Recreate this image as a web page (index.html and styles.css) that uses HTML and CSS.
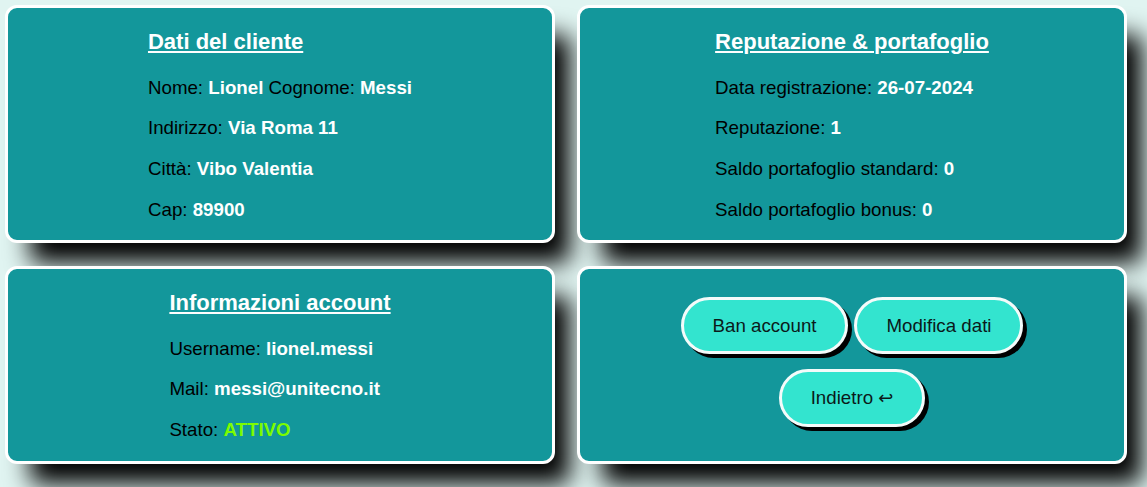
FILE: index.html
```html
<!DOCTYPE html>
<html lang="it">
<head>
<meta charset="utf-8">
<title>Dati cliente</title>
<link rel="stylesheet" href="styles.css">
</head>
<body>
<main class="grid">
  <section class="card">
    <div class="card-body">
      <h2 class="card-title">Dati del cliente</h2>
      <p class="row">Nome: <b>Lionel</b> Cognome: <b>Messi</b></p>
      <p class="row">Indirizzo: <b>Via Roma 11</b></p>
      <p class="row">Città: <b>Vibo Valentia</b></p>
      <p class="row">Cap: <b>89900</b></p>
    </div>
  </section>
  <section class="card">
    <div class="card-body">
      <h2 class="card-title">Reputazione &amp; portafoglio</h2>
      <p class="row">Data registrazione: <b>26-07-2024</b></p>
      <p class="row">Reputazione: <b>1</b></p>
      <p class="row">Saldo portafoglio standard: <b>0</b></p>
      <p class="row">Saldo portafoglio bonus: <b>0</b></p>
    </div>
  </section>
  <section class="card">
    <div class="card-body">
      <h2 class="card-title">Informazioni account</h2>
      <p class="row">Username: <b>lionel.messi</b></p>
      <p class="row">Mail: <b>messi@unitecno.it</b></p>
      <p class="row">Stato: <b class="active">ATTIVO</b></p>
    </div>
  </section>
  <section class="card card-actions">
    <div class="btn-row">
      <button class="btn" type="button">Ban account</button>
      <button class="btn" type="button">Modifica dati</button>
    </div>
    <div class="btn-row">
      <button class="btn" type="button">Indietro <span class="arrow">↩</span></button>
    </div>
  </section>
</main>
</body>
</html>
```

FILE: styles.css
```css
html, body {
  margin: 0;
  padding: 0;
  height: 100%;
}

body {
  background: #e0f4f1;
  font-family: "Liberation Sans", Arial, sans-serif;
  color: #000;
  overflow: hidden;
}

.grid {
  display: grid;
  grid-template-columns: 1fr 1fr;
  column-gap: 22px;
  row-gap: 23px;
  padding: 5px 20px 25px 5px;
}

.card {
  background: #13979b;
  border: 3px solid #ffffff;
  border-radius: 12px;
  box-shadow: 20px 25px 25px -5px #000;
}

.card-body {
  width: fit-content;
  margin: 0 auto;
  padding: 20px 0 20px;
}

.card-title {
  margin: 0 0 21px;
  font-size: 22px;
  line-height: 27.6px;
  font-weight: bold;
  color: #fff;
  text-decoration: underline;
  text-decoration-thickness: 2px;
  text-underline-offset: 2px;
}

.row {
  margin: 0 0 19.2px;
  font-size: 18.72px;
  line-height: 21.5px;
  white-space: nowrap;
}

.row:last-child {
  margin-bottom: 0;
}

.row b {
  color: #fff;
}

.row b.active {
  color: #7cfc00;
}

.card-actions {
  display: flex;
  flex-direction: column;
  justify-content: center;
  align-items: center;
  gap: 15px;
  padding-bottom: 6px;
}

.btn-row {
  display: flex;
  gap: 6px;
  justify-content: center;
}

.btn {
  font-family: "Liberation Sans", Arial, sans-serif;
  font-size: 18.72px;
  line-height: 21.5px;
  color: #0b1a1a;
  background: #33e4cf;
  border: 3px solid #f4fbfa;
  border-radius: 30px;
  padding: 15px 29px;
  box-shadow: 4px 4px 0 #000;
  cursor: pointer;
}

.arrow {
  font-family: "DejaVu Sans", sans-serif;
  font-size: 18px;
}
```
